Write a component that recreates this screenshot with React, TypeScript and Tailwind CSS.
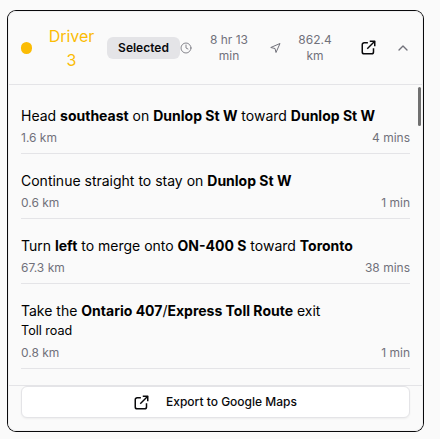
import React from "react";
import { Clock } from "lucide-react";

function ExternalIcon() {
  return (
    <svg className="size-[15px] shrink-0" viewBox="0 0 24 24" fill="none" stroke="currentColor" strokeWidth="2.4" strokeLinejoin="round">
      <path d="M11 4.5H5a3 3 0 0 0-3 3V19a3 3 0 0 0 3 3h12a3 3 0 0 0 3-3v-6" />
      <path d="M14 2h8v8" />
      <path d="M22 2 10 14" />
    </svg>
  );
}

type StepProps = { children: React.ReactNode; distance: string; time: string; note?: string };

function Step({ children, distance, time, note }: StepProps) {
  return (
    <li className="mb-[17px] border-b border-[#e4e4e7] pb-[7px]">
      <div className="whitespace-nowrap text-[14px] leading-[20px] text-black [&_b]:font-bold">{children}</div>
      {note && <div className="text-[12.6px] leading-[20px] text-black">{note}</div>}
      <div className="flex justify-between pt-1 text-[12px] leading-[16px] text-[#71717a]">
        <span>{distance}</span>
        <span>{time}</span>
      </div>
    </li>
  );
}

export default function App() {
  return (
    <div className="h-[439px] w-[440px] bg-[#fafafa] pl-2 pt-[11px] font-['Inter',sans-serif] text-[#09090b]">
      <div className="flex h-[420px] w-[415px] flex-col overflow-hidden rounded-lg border border-[#f0f0f1] ring-1 ring-[#09090b]">
        <header className="-mt-px flex h-[74px] shrink-0 items-center border-b border-[#e4e4e7] pl-3">
          <span className="h-3 w-[11px] shrink-0 rounded-full bg-[#fbbc04]" />
          <h2 className="ml-4 w-[47px] shrink-0 text-center text-[16px] leading-6 text-[#fbbc04]">Driver 3</h2>
          <span className="ml-3 flex h-[22px] w-[73px] shrink-0 items-center justify-center rounded-md bg-[#e4e4e7] text-[12px] font-semibold">Selected</span>
          <Clock className="size-3 shrink-0 text-[#71717a]" strokeWidth={1.7} />
          <span className="ml-[15px] w-[44px] shrink-0 text-center text-[12px] leading-4 text-[#71717a]">8 hr 13 min</span>
          <svg className="ml-[18px] size-3 shrink-0 text-[#71717a]" viewBox="0 0 24 24" fill="none" stroke="currentColor" strokeWidth="2" strokeLinejoin="round">
            <path d="M22 3 3.500 11l8.500 2 2 8Z" />
          </svg>
          <span className="ml-4 w-[36px] shrink-0 text-center text-[12px] leading-4 text-[#71717a]">862.4 km</span>
          <span className="ml-7 shrink-0"><ExternalIcon /></span>
          <svg className="ml-[19px] size-4 shrink-0 text-[#71717a]" viewBox="0 0 24 24" fill="none" stroke="currentColor" strokeWidth="2" strokeLinecap="round" strokeLinejoin="round">
            <path d="m6 15 6-6 6 6" />
          </svg>
        </header>
        <div className="flex h-[300px] shrink-0 justify-between overflow-hidden">
          <ol className="ml-3 mt-[21px] w-[389px]">
            <Step distance="1.6 km" time="4 mins">Head <b>southeast</b> on <b>Dunlop St W</b> toward <b>Dunlop St W</b></Step>
            <Step distance="0.6 km" time="1 min">Continue straight to stay on <b>Dunlop St W</b></Step>
            <Step distance="67.3 km" time="38 mins">Turn <b>left</b> to merge onto <b>ON-400 S</b> toward <b>Toronto</b></Step>
            <Step distance="0.8 km" time="1 min" note="Toll road">Take the <b>Ontario 407</b>/<b>Express Toll Route</b> exit</Step>
          </ol>
          <div className="mr-px mt-[2px] h-[39px] w-[3px] rounded-full bg-[#707070]" />
        </div>
        <footer className="border-t border-[#e4e4e7] px-3">
          <button className="flex h-8 w-[389px] items-center justify-center gap-[17px] rounded-md border border-[#e4e4e7] bg-white text-[12px] font-medium shadow-xs">
            <ExternalIcon />
            Export to Google Maps
          </button>
        </footer>
      </div>
    </div>
  );
}
